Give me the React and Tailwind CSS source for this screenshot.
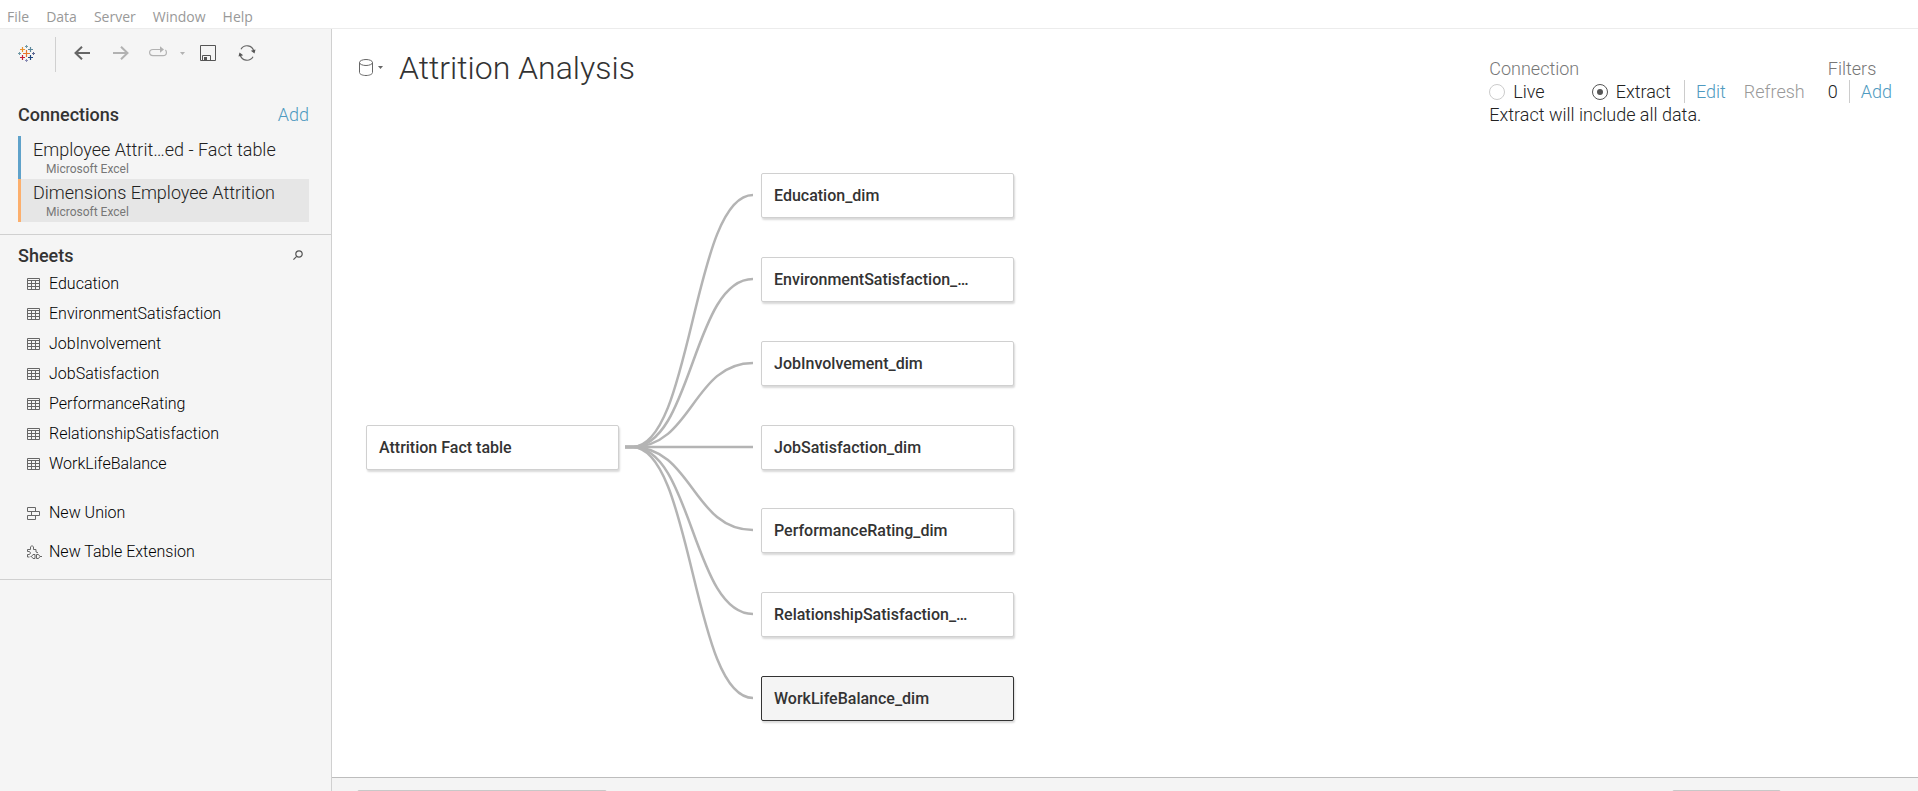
const SHEETS = [
  'Education',
  'EnvironmentSatisfaction',
  'JobInvolvement',
  'JobSatisfaction',
  'PerformanceRating',
  'RelationshipSatisfaction',
  'WorkLifeBalance',
];

const CONNECTIONS = [
  { name: 'Employee Attrit…ed - Fact table', bar: 'border-[#5fa2ca]', bg: '' },
  { name: 'Dimensions Employee Attrition', bar: 'border-[#fcaf6d]', bg: 'bg-[#e6e6e6]' },
];

const ROOT = { x: 34, y: 396 };
const LEAF_X = 429;
const CARD_H = 45;
const LEAVES = [
  { name: 'Education_dim', y: 144 },
  { name: 'EnvironmentSatisfaction_…', y: 228 },
  { name: 'JobInvolvement_dim', y: 312 },
  { name: 'JobSatisfaction_dim', y: 396 },
  { name: 'PerformanceRating_dim', y: 479 },
  { name: 'RelationshipSatisfaction_…', y: 563 },
  { name: 'WorkLifeBalance_dim', y: 647, selected: true },
];

function Logo() {
  const plus = (cx, cy, r, color, w) => (
    <path key={`${cx}-${cy}`} d={`M${cx - r} ${cy}H${cx + r}M${cx} ${cy - r}V${cy + r}`} stroke={color} strokeWidth={w} />
  );
  return (
    <svg width="17" height="17" viewBox="0 0 17 17" fill="none" aria-hidden="true">
      {plus(8.5, 8.5, 3.5, '#e8762d', 1.2)}
      {plus(4.5, 4.5, 2.5, '#eb912c', 1.2)}
      {plus(12.5, 4.5, 2.5, '#5b879b', 1.2)}
      {plus(4.5, 12.5, 2.5, '#c72037', 1.2)}
      {plus(12.5, 12.5, 2.5, '#1f457e', 1.2)}
      {plus(8.5, 1.5, 1.5, '#7099a6', 1)}
      {plus(8.5, 15.5, 1.5, '#8a8cb5', 1)}
      {plus(1.5, 8.5, 1.5, '#7099a6', 1)}
      {plus(15.5, 8.5, 1.5, '#5c6692', 1)}
    </svg>
  );
}

function TableIcon() {
  return (
    <svg width="13" height="12" viewBox="0 0 13 12" fill="none" stroke="#666" aria-hidden="true">
      <path d="M.5 .5h12v11H.5zM.5 2.500h12M.5 5.500h12M.5 8.500h12M4.500 2.500v9M8.500 2.500v9" />
    </svg>
  );
}

function UnionIcon() {
  return (
    <svg width="13" height="13" viewBox="0 0 13 13" fill="none" stroke="#666" aria-hidden="true">
      <path d="M.5 .5h8v4h-8zM4.5 4.5h8v4h-8zM.5 8.5h8v4h-8z" />
    </svg>
  );
}

function ExtensionIcon() {
  return (
    <svg width="15" height="14" viewBox="0 0 15 14" fill="none" stroke="#666" aria-hidden="true">
      <path d="M3.500 4.500V2L5 .5 6.500 2v2.500H9V7l2 .8M.5 12V9.500H2.500L3.500 8 2.500 6.500H.5V4.500h3M.5 12h2" />
      <path d="M8 9.500H6L4.500 11.500l1.500 2H8zM9.500 9.500h2l1.500 2-1.500 2h-2zM13 11.500h2M3.500 11.500h1" />
    </svg>
  );
}

function ToolButton({ label, className, children }) {
  return (
    <button type="button" aria-label={label} className={`flex h-8 items-center justify-center ${className}`}>
      {children}
    </button>
  );
}

function Toolbar() {
  return (
    <div className="flex items-start pt-2 pl-[18px]">
      <ToolButton label="Start page" className="w-[17px]">
        <Logo />
      </ToolButton>
      <div className="ml-5 h-[35px] w-px bg-[#d0d0d0]" />
      <ToolButton label="Back" className="ml-[18px] w-4">
        <svg width="16" height="14" viewBox="0 0 16 14" fill="none" stroke="#666" strokeWidth="2">
          <path d="M16 7H1.500M8 .7L1.500 7 8 13.300" />
        </svg>
      </ToolButton>
      <ToolButton label="Forward" className="ml-[23px] w-4">
        <svg width="16" height="14" viewBox="0 0 16 14" fill="none" stroke="#b2b2b2" strokeWidth="2">
          <path d="M0 7h14.500M8 .7L14.500 7 8 13.300" />
        </svg>
      </ToolButton>
      <ToolButton label="Replay" className="ml-5 w-[18px]">
        <svg width="18" height="14" viewBox="0 0 18 14" fill="none" stroke="#b2b2b2" strokeWidth="1.200">
          <path d="M12 3.500H4Q.6 3.500 .6 6.500t3.400 3.200h10q3.400 0 3.400-3.200 0-1.700-1-2.500" />
          <path d="M11 .2v6.600l4-3.300z" fill="#b2b2b2" stroke="none" />
        </svg>
      </ToolButton>
      <ToolButton label="Replay options" className="ml-3 w-[7px]">
        <svg width="5" height="3" viewBox="0 0 5 3">
          <path d="M0 0h5L2.500 3z" fill="#b2b2b2" />
        </svg>
      </ToolButton>
      <ToolButton label="Save" className="ml-[14px] w-4">
        <svg width="16" height="16" viewBox="0 0 16 16" fill="none" stroke="#555">
          <path d="M.5 .5h15v15H.5zM2.500 15.500v-5h8v5" />
          <path d="M4 12h3v3.500H4z" fill="#555" stroke="none" />
        </svg>
      </ToolButton>
      <ToolButton label="Refresh" className="ml-[22px] w-[18px]">
        <svg width="18" height="16" viewBox="0 0 18 16" fill="none" stroke="#666" strokeWidth="1.200">
          <path d="M3 4.200A7 7 0 0 1 15.800 6M15 11.800A7 7 0 0 1 2.200 10" />
          <path d="M12.800 5.800L17.500 4.500 16.500 8.500zM5.200 10.200L.5 11.500 1.500 7.500z" fill="#555" stroke="none" />
        </svg>
      </ToolButton>
    </div>
  );
}

function Sidebar() {
  return (
    <aside className="w-[332px] shrink-0 border-r border-[#d0d0d0] bg-[#f5f5f5]">
      <Toolbar />
      <section className="border-b border-[#d0d0d0] pt-[30px] pr-[22px] pb-3 pl-[18px]">
        <div className="flex h-6 items-center justify-between">
          <h2 className="text-[18px] font-medium text-[#333]">Connections</h2>
          <button type="button" className="text-[18px] font-light text-[#4f9ac0]">Add</button>
        </div>
        <ul className="pt-[10px]">
          {CONNECTIONS.map((c) => (
            <li key={c.name}>
              <button type="button" className={`flex h-[43px] w-full flex-col border-l-[3px] pt-1 pl-3 text-left ${c.bar} ${c.bg}`}>
                <span className="text-[18px] leading-5 font-light text-[#222]">{c.name}</span>
                <span className="pl-[13px] text-[12px] leading-[18px] text-[#777]">Microsoft Excel</span>
              </button>
            </li>
          ))}
        </ul>
      </section>
      <section className="border-b border-[#d0d0d0] pt-2 pb-[9px]">
        <div className="flex h-6 items-center justify-between pr-7 pl-[18px]">
          <h2 className="text-[18px] font-medium text-[#333]">Sheets</h2>
          <button type="button" aria-label="Search sheets">
            <svg width="10" height="10" viewBox="0 0 10 10" fill="none" stroke="#555" strokeWidth="1.200">
              <circle cx="6" cy="4" r="3.200" />
              <path d="M3.700 6.300L.4 9.600" />
            </svg>
          </button>
        </div>
        <ul className="pt-[2px] text-[16px] font-light text-black">
          {SHEETS.map((s) => (
            <li key={s} className="flex h-[30px] items-center gap-[9px] pl-[27px]">
              <TableIcon />
              <span>{s}</span>
            </li>
          ))}
        </ul>
        <div className="flex flex-col gap-px pt-[14px] text-[16px] font-light text-black">
          <button type="button" className="flex h-10 items-center gap-[9px] pl-[27px]">
            <UnionIcon />
            <span>New Union</span>
          </button>
          <button type="button" className="flex h-9 items-center gap-[7px] pl-[27px]">
            <ExtensionIcon />
            <span>New Table Extension</span>
          </button>
        </div>
      </section>
    </aside>
  );
}

function Radio({ label, checked }) {
  return (
    <label className="flex items-center gap-2">
      <input
        type="radio"
        name="connection"
        defaultChecked={checked}
        className="size-4 appearance-none rounded-full border border-[#ccc] bg-white bg-clip-content p-[4px] checked:border-[#555] checked:bg-[#555]"
      />
      <span>{label}</span>
    </label>
  );
}

function Header() {
  return (
    <header className="flex items-start justify-between pr-[26px] pl-[27px]">
      <div className="flex items-center pt-[18px]">
        <button type="button" aria-label="Data source menu" className="flex items-center gap-[5px]">
          <svg width="14" height="17" viewBox="0 0 14 17" fill="none" stroke="#666">
            <ellipse cx="7" cy="3.500" rx="6.500" ry="3" />
            <path d="M.5 3.500v10c0 1.700 2.900 3 6.500 3s6.500-1.300 6.500-3v-10" />
          </svg>
          <svg width="5" height="3" viewBox="0 0 5 3">
            <path d="M0 0h5L2.500 3z" fill="#666" />
          </svg>
        </button>
        <h1 className="pt-px pl-4 text-[32px] leading-10 font-light text-[#333]">Attrition Analysis</h1>
      </div>
      <div className="flex gap-[23px] pt-7 text-[18px] leading-[23px] font-light text-[#222]">
        <div>
          <div className="text-[#777]">Connection</div>
          <div className="flex items-center">
            <Radio label="Live" />
            <div className="pl-[47px]">
              <Radio label="Extract" checked />
            </div>
            <div className="ml-[13px] h-[23px] w-px bg-[#ccc]" />
            <button type="button" className="pl-[11px] text-[#4f9ac0]">Edit</button>
            <button type="button" disabled className="pl-[18px] text-[#999]">Refresh</button>
          </div>
          <p>Extract will include all data.</p>
        </div>
        <div>
          <div className="text-[#777]">Filters</div>
          <div className="flex items-center">
            <span>0</span>
            <div className="ml-[11px] h-[23px] w-px bg-[#ccc]" />
            <button type="button" className="pl-[11px] text-[#4f9ac0]">Add</button>
          </div>
        </div>
      </div>
    </header>
  );
}

function Node({ name, x, y, selected }) {
  return (
    <button
      type="button"
      style={{ left: x, top: y }}
      className={`absolute h-[45px] w-[253px] rounded-[2px] border pl-3 text-left text-[16px] font-medium text-[#333] shadow-[1px_2px_2px_rgba(0,0,0,0.15)] ${
        selected ? 'border-[#333] bg-[#f4f4f4]' : 'border-[#d0d0d0] bg-white'
      }`}
    >
      {name}
    </button>
  );
}

function Canvas() {
  const x0 = ROOT.x + 259;
  const x1 = LEAF_X - 8;
  const y0 = ROOT.y + 22;
  const bend = x0 + 7;
  const mid = (bend + x1) / 2;
  return (
    <div className="absolute inset-0">
      <svg className="absolute inset-0 h-full w-full" fill="none" stroke="#b4b4b4" strokeWidth="2.500" aria-hidden="true">
        {LEAVES.map((l) => {
          const y = l.y + (CARD_H - 1) / 2;
          return <path key={l.name} d={`M${x0} ${y0}H${bend}C${mid} ${y0} ${mid} ${y} ${x1} ${y}`} />;
        })}
      </svg>
      <Node name="Attrition Fact table" x={ROOT.x} y={ROOT.y} />
      {LEAVES.map((l) => (
        <Node key={l.name} name={l.name} x={LEAF_X} y={l.y} selected={l.selected} />
      ))}
    </div>
  );
}

export default function App() {
  return (
    <div className="flex h-screen flex-col overflow-hidden bg-white font-['Roboto',sans-serif]">
      <nav className="flex h-[29px] shrink-0 items-center gap-[17px] border-b border-[#ececec] pt-1 pl-[7px] font-['Open_Sans',sans-serif] text-[14px] text-[#999]">
        {['File', 'Data', 'Server', 'Window', 'Help'].map((m) => (
          <button key={m} type="button">{m}</button>
        ))}
      </nav>
      <div className="flex min-h-0 flex-1">
        <Sidebar />
        <main className="flex min-w-0 flex-1 flex-col">
          <div className="relative min-h-0 flex-1">
            <Canvas />
            <div className="relative">
              <Header />
            </div>
          </div>
          <div className="flex h-[14px] shrink-0 items-start justify-between overflow-hidden border-t border-[#bdbdbd] bg-[#f4f4f4] pt-3 pr-[137px] pl-[25px]">
            <div className="h-6 w-[250px] shrink-0 rounded-t-[2px] border border-[#c8c8c8] bg-white" />
            <div className="h-6 w-[109px] shrink-0 rounded-t-[2px] border border-[#c8c8c8] bg-white" />
          </div>
        </main>
      </div>
    </div>
  );
}
